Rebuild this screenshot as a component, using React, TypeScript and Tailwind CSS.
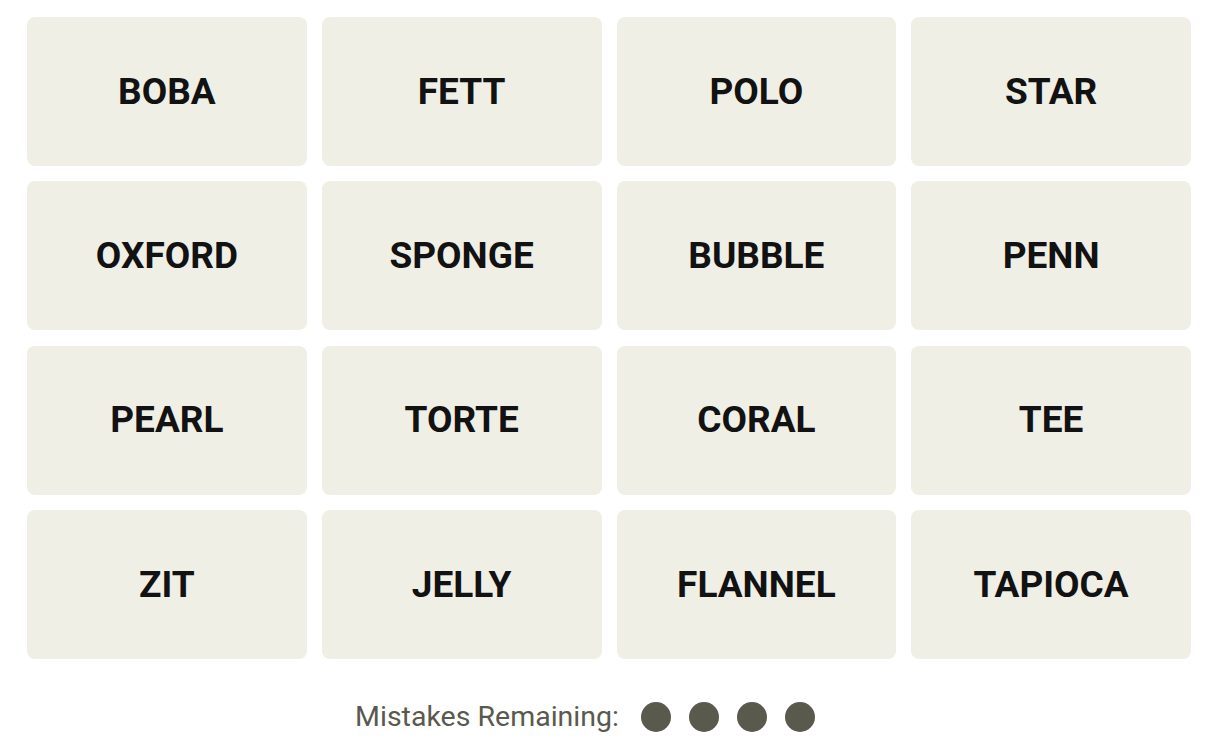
import React from 'react';

const words = [
  'BOBA', 'FETT', 'POLO', 'STAR',
  'OXFORD', 'SPONGE', 'BUBBLE', 'PENN',
  'PEARL', 'TORTE', 'CORAL', 'TEE',
  'ZIT', 'JELLY', 'FLANNEL', 'TAPIOCA',
];

export default function App() {
  return (
    <div className="w-[1225px] h-[750px] bg-white overflow-hidden font-['Roboto',sans-serif]">
      <div className="grid grid-cols-4 gap-x-[15px] gap-y-[15.33px] pl-[27px] pr-[34px] pt-[17px]">
        {words.map((w) => (
          <div
            key={w}
            className="h-[149px] rounded-[8px] bg-[#efefe6] flex items-center justify-center text-[37px] font-bold text-[#121212]"
          >
            {w}
          </div>
        ))}
      </div>
      <div className="flex items-center justify-center pr-[55px] mt-[43px]">
        <span className="text-[28.5px] text-[#5a594e] leading-none">Mistakes Remaining:</span>
        <div className="flex gap-[18px] ml-[22px]">
          {[0, 1, 2, 3].map((i) => (
            <div key={i} className="w-[30px] h-[30px] rounded-full bg-[#5a594e]" />
          ))}
        </div>
      </div>
    </div>
  );
}
